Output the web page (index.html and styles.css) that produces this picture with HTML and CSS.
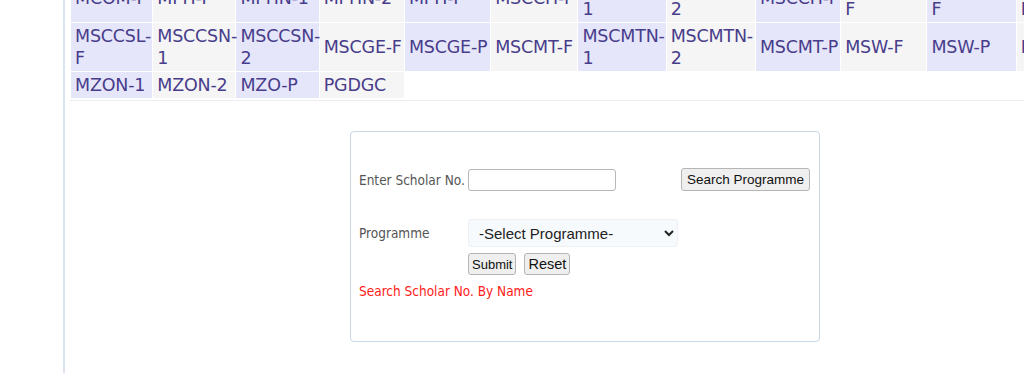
FILE: index.html
```html
<!DOCTYPE html>
<html lang="en">

<head>
  <meta charset="UTF-8" />
  <meta name="viewport" content="width=device-width, initial-scale=1" />
  <title>Search Scholar</title>
  <link rel="stylesheet" href="styles.css">
</head>

<body>
  <div class="page">
    <div class="side-bar"></div>

    <div class="main">
      <div class="course-list">
        <table class="course-table">
          <colgroup>
            <col style="width: 81px">
            <col style="width: 82px">
            <col style="width: 82px">
            <col style="width: 84px">
            <col style="width: 85px">
            <col style="width: 86px">
            <col style="width: 87px">
            <col style="width: 88px">
            <col style="width: 84px">
            <col style="width: 85px">
            <col style="width: 88px">
            <col style="width: 88px">
          </colgroup>
          <tr>
            <td>MCOM-F</td>
            <td>MPH-F</td>
            <td>MPHN-1</td>
            <td>MPHN-2</td>
            <td>MPH-P</td>
            <td>MSCCH-F</td>
            <td>MSCCHN-<br>1</td>
            <td>MSCCHN-<br>2</td>
            <td>MSCCH-P</td>
            <td>MSCCSH-<br>F</td>
            <td>MSCCSHN-<br>F</td>
            <td>MSCCSH-<br>P</td>
          </tr>
          <tr>
            <td>MSCCSL-<br>F</td>
            <td>MSCCSN-<br>1</td>
            <td>MSCCSN-<br>2</td>
            <td>MSCGE-F</td>
            <td>MSCGE-P</td>
            <td>MSCMT-F</td>
            <td>MSCMTN-<br>1</td>
            <td>MSCMTN-<br>2</td>
            <td>MSCMT-P</td>
            <td>MSW-F</td>
            <td>MSW-P</td>
            <td>MZO-F</td>
          </tr>
          <tr>
            <td>MZON-1</td>
            <td>MZON-2</td>
            <td>MZO-P</td>
            <td>PGDGC</td>
            <td class="empty"></td>
            <td class="empty"></td>
            <td class="empty"></td>
            <td class="empty"></td>
            <td class="empty"></td>
            <td class="empty"></td>
            <td class="empty"></td>
            <td class="empty"></td>
          </tr>
        </table>
      </div>

      <div class="search-box">
        <div class="field-row">
          <label class="field-label" for="scholarNo">Enter Scholar No.</label>
          <input class="text-input" type="text" id="scholarNo">
          <button class="search-button">Search Programme</button>
        </div>

        <div class="field-row programme-row">
          <label class="field-label" for="programme">Programme</label>
          <select class="programme-select" id="programme">
            <option>-Select Programme-</option>
          </select>
        </div>

        <div class="button-row">
          <button class="small-button">Submit</button>
          <button class="small-button reset-button">Reset</button>
        </div>

        <p class="search-link">Search Scholar No. By Name</p>
      </div>
    </div>
  </div>
</body>

</html>
```

FILE: styles.css
```css
body {
  margin: 0;
  overflow: hidden;
  background: #ffffff;
  font-family: Tahoma, "DejaVu Sans Condensed", "DejaVu Sans", sans-serif;
}

.page {
  display: flex;
  min-height: 100vh;
}

.side-bar {
  width: 63px;
  flex-shrink: 0;
  border-right: 2px solid #dbe3ee;
}

.main {
  flex: 1;
  min-width: 0;
  padding-left: 5px;
}

.course-list {
  margin-top: -27px;
  border-bottom: 1px solid #ececf2;
  padding-bottom: 1px;
}

.course-table {
  table-layout: fixed;
  width: 1036px;
  border-spacing: 1px;
  font-family: "DejaVu Sans", Verdana, sans-serif;
  font-size: 17.5px;
  color: #483d8b;
}

.course-table td {
  padding: 2px 0 2px 4px;
  line-height: 22px;
  vertical-align: middle;
  white-space: nowrap;
  letter-spacing: -0.2px;
  background-color: #e6e6fa;
}

.course-table td:nth-child(even) {
  background-color: #f5f5f5;
}

.course-table td.empty {
  background-color: #ffffff;
}

.search-box {
  box-sizing: border-box;
  width: 470px;
  height: 211px;
  margin: 30px 0 0 280px;
  padding: 36px 9px 0 8px;
  border: 1px solid #c9d8e8;
  border-radius: 4px;
  font-size: 13.5px;
}

.field-row {
  display: flex;
  align-items: center;
}

.field-label {
  width: 109px;
  color: #555555;
}

.text-input {
  box-sizing: border-box;
  width: 148px;
  height: 22px;
  border: 1px solid #b8b8b8;
  border-radius: 3px;
}

.search-button {
  margin-left: auto;
  height: 23px;
  padding: 0 5px;
  font-family: "Liberation Sans", Arial, sans-serif;
  font-size: 13.5px;
  color: #111111;
  background-color: #efefef;
  border: 1px solid #b5b5b5;
  border-radius: 3px;
}

.programme-row {
  margin-top: 28px;
}

.programme-select {
  box-sizing: border-box;
  width: 210px;
  height: 28px;
  padding: 0 6px;
  font-family: "Liberation Sans", Arial, sans-serif;
  font-size: 15px;
  color: #222222;
  background-color: #f7fafd;
  border: 1px solid #edf1f5;
  border-radius: 3px;
}

.button-row {
  display: flex;
  gap: 8px;
  margin: 6px 0 0 109px;
}

.small-button {
  height: 22px;
  padding: 0 3px;
  font-family: "Liberation Sans", Arial, sans-serif;
  font-size: 13px;
  color: #111111;
  background-color: #efefef;
  border: 1px solid #b5b5b5;
  border-radius: 3px;
}

.reset-button {
  font-size: 14.5px;
}

.search-link {
  margin: 8px 0 0;
  color: #ff1a1a;
}
```
